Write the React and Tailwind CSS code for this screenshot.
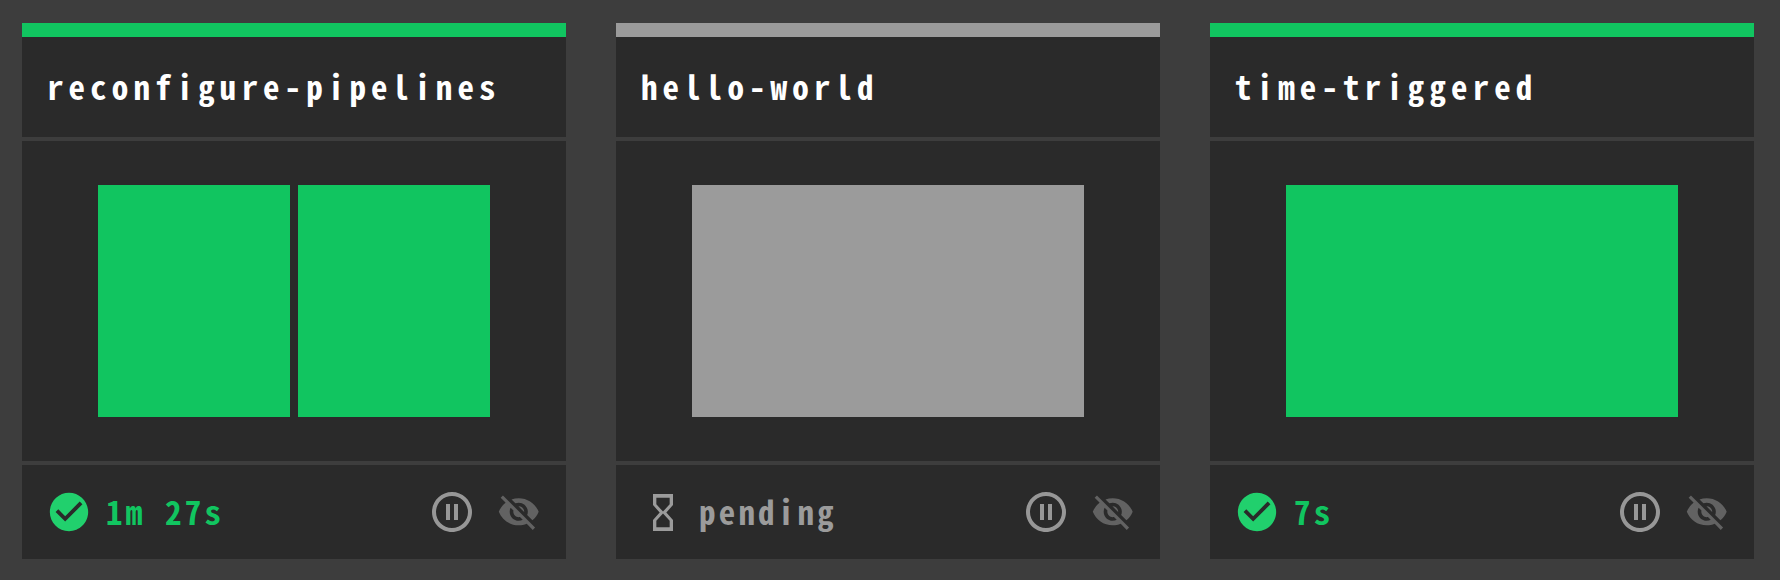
const PIPELINES = [
  { name: "reconfigure-pipelines", status: "passed", label: "1m 27s", jobs: 2 },
  { name: "hello-world", status: "pending", label: "pending", jobs: 1 },
  { name: "time-triggered", status: "passed", label: "7s", jobs: 1 },
];

const FILL = { passed: "bg-[#11c560]", pending: "bg-[#9b9b9b]" };
const TEXT = { passed: "pl-[14px] text-[#11c560]", pending: "pl-[26px] text-[#9b9b9b]" };

function CheckIcon() {
  return (
    <svg className="ml-[24px] size-[46px] text-[#21d06d]" viewBox="0 0 24 24" fill="currentColor">
      <path d="M12 2C6.48 2 2 6.48 2 12s4.48 10 10 10 10-4.48 10-10S17.52 2 12 2zm-2 15l-5-5 1.41-1.41L10 14.17l7.59-7.59L19 8l-9 9z" />
    </svg>
  );
}

function HourglassIcon() {
  return (
    <svg className="ml-[37px] h-[37px] w-[20px] text-[#9b9b9b]" viewBox="6 2 12 20" preserveAspectRatio="none" fill="currentColor">
      <path d="M6 2v6h.01L6 8.01 10 12l-4 4 .01.01H6V22h12v-5.99h-.01L18 16l-4-4 4-3.99-.01-.01H18V2H6zm10 14.5V20H8v-3.5l4-4 4 4zm-4-5l-4-4V4h8v3.5l-4 4z" />
    </svg>
  );
}

function PauseIcon() {
  return (
    <svg className="size-12 text-[#979797]" viewBox="0 0 24 24" fill="currentColor">
      <path d="M9 16h2V8H9v8zm3-14C6.48 2 2 6.48 2 12s4.48 10 10 10 10-4.48 10-10S17.52 2 12 2zm0 18c-4.41 0-8-3.59-8-8s3.59-8 8-8 8 3.59 8 8-3.59 8-8 8zm1-4h2V8h-2v8z" />
    </svg>
  );
}

function HiddenIcon() {
  return (
    <svg className="ml-[21px] mr-[25.5px] size-[43.5px] text-[#626262]" viewBox="0 0 24 24" fill="currentColor">
      <path d="M12 7c2.76 0 5 2.24 5 5 0 .65-.13 1.26-.36 1.83l2.92 2.92c1.51-1.26 2.7-2.89 3.43-4.75-1.73-4.39-6-7.5-11-7.5-1.4 0-2.74.25-3.98.7l2.16 2.16C10.74 7.13 11.35 7 12 7zM2 4.27l2.28 2.28.46.46C3.08 8.3 1.78 10.02 1 12c1.73 4.39 6 7.5 11 7.5 1.55 0 3.03-.3 4.38-.84l.42.42L19.73 22 21 20.73 3.27 3 2 4.27zM7.53 9.8l1.55 1.55c-.05.21-.08.43-.08.65 0 1.66 1.34 3 3 3 .22 0 .44-.03.65-.08l1.55 1.55c-.67.33-1.41.53-2.2.53-2.76 0-5-2.24-5-5 0-.79.2-1.53.53-2.2zm4.31-.78l3.15 3.15.02-.16c0-1.66-1.34-3-3-3l-.17.01z" />
    </svg>
  );
}

function PipelineCard({ name, status, label, jobs }) {
  return (
    <article className="flex w-[544px] flex-col gap-1">
      <header>
        <div className={`h-3.5 ${FILL[status]}`} />
        <h2 className="flex h-[100px] items-center bg-[#2a2a2a] pl-[25px] pb-[2px] font-['Noto_Sans_Mono_CJK_SC','Liberation_Mono',monospace] text-[33px] leading-none font-bold tracking-[5.1px] whitespace-nowrap text-white">
          {name}
        </h2>
      </header>
      <div className="flex h-80 gap-2 bg-[#2a2a2a] px-[76px] py-11">
        {Array.from({ length: jobs }, (_, i) => (
          <div key={i} className={`flex-1 ${FILL[status]}`} />
        ))}
      </div>
      <footer className="flex h-[94px] items-center bg-[#2a2a2a]">
        {status === "passed" ? <CheckIcon /> : <HourglassIcon />}
        <span className={`flex-1 pb-[2px] font-['Noto_Sans_Mono_CJK_SC','Liberation_Mono',monospace] text-[33px] leading-none font-bold tracking-[3.2px] ${TEXT[status]}`}>
          {label}
        </span>
        <PauseIcon />
        <HiddenIcon />
      </footer>
    </article>
  );
}

export default function App() {
  return (
    <main className="flex h-[580px] w-[1780px] gap-[50px] overflow-hidden bg-[#3d3d3d] pt-[23px] pl-[22px]">
      {PIPELINES.map((p) => (
        <PipelineCard key={p.name} {...p} />
      ))}
    </main>
  );
}
